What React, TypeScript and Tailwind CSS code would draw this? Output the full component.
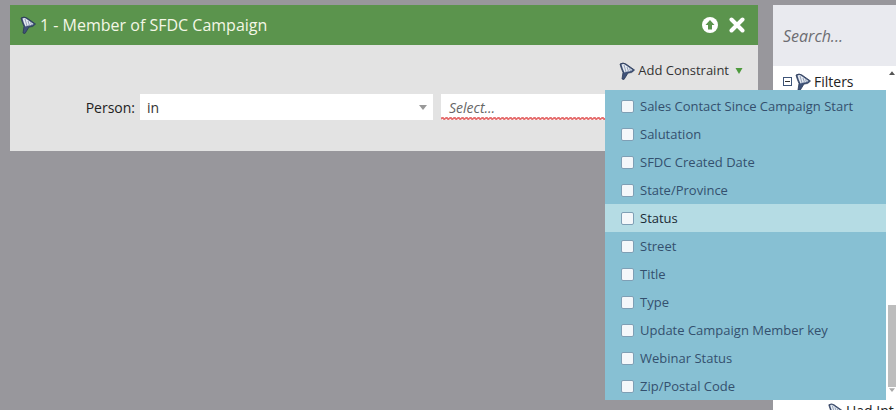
const items = [
  'Sales Contact Since Campaign Start',
  'Salutation',
  'SFDC Created Date',
  'State/Province',
  'Status',
  'Street',
  'Title',
  'Type',
  'Update Campaign Member key',
  'Webinar Status',
  'Zip/Postal Code',
];

function Funnel({ className }: { className: string }) {
  return (
    <svg viewBox="0 0 16 18" className={className}>
      <path d="M1 2 Q4 0 7 2 L15.5 8 Q13 11.5 9 11 L5 17.5 L3 17 L4 10.5 Q2 6 1 2 Z" fill="#3f5278" stroke="#2a3856" strokeWidth="0.8" />
      <path d="M2.5 2.5 Q4.5 1.5 6.5 3 L13.5 8 Q11 9.5 8.5 9.5 L5.5 10.5 Q3.5 6.5 2.5 2.5 Z" fill="#e6ebf2" />
      <path d="M5 3 L7 10 M8 5 L9.5 9.5 M10.5 6.5 L11.5 9" stroke="#7c8ca6" strokeWidth="0.8" />
    </svg>
  );
}

export default function App() {
  return (
    <div className="relative flex w-[896px] h-[410px] overflow-hidden gap-[15px] pl-[10px] pt-[5px] bg-[#98979c] font-['Open_Sans',sans-serif]">
      <div className="w-[748px] h-[146px] flex flex-col bg-[#e3e3e3]">
        <div className="h-10 flex items-center justify-between bg-[#5b944d] pl-[10px] pr-[13px]">
          <div className="flex items-center gap-[4px]">
            <Funnel className="w-4 h-[18px]" />
            <span className="text-[16px] text-[#f4f7e6]">1 - Member of SFDC Campaign</span>
          </div>
          <div className="flex items-center gap-[11px]">
            <svg viewBox="0 0 16 16" className="w-4 h-4">
              <circle cx="8" cy="8" r="8" fill="#fff" />
              <path d="M8 3 L12.5 8 H10 V12.5 H6 V8 H3.5 Z" fill="#5b944d" />
            </svg>
            <svg viewBox="0 0 16 16" className="w-4 h-4">
              <path d="M2.5 2.5 L13.5 13.5 M13.5 2.5 L2.5 13.5" stroke="#fff" strokeWidth="4" strokeLinecap="round" />
            </svg>
          </div>
        </div>
        <div className="flex justify-end items-center mt-[16px] h-[20px] pr-[15px]">
          <Funnel className="w-4 h-[18px]" />
          <span className="text-[13px] text-[#333] ml-[3px]">Add Constraint</span>
          <svg viewBox="0 0 8 8" className="w-2 h-2 ml-[6px]">
            <path d="M0.5 1 H7.5 L4 7 Z" fill="#4d9a3c" />
          </svg>
        </div>
        <div className="flex items-center mt-[13px] pl-[70px]">
          <span className="text-[14px] text-[#222] w-[55px] text-right">Person:</span>
          <div className="ml-[5px] w-[293px] h-[26px] bg-white flex items-center justify-between pl-[7px] pr-[5px]">
            <span className="text-[14px] text-[#333]">in</span>
            <svg viewBox="0 0 8 5" className="w-2 h-[5px] mr-[1px]">
              <path d="M0 0 H8 L4 5 Z" fill="#999" />
            </svg>
          </div>
          <div className="relative ml-[8px] w-[210px] h-[26px] bg-white flex items-center pl-[8px]">
            <span className="text-[14px] italic text-[#666]">Select...</span>
            <svg className="absolute left-0 bottom-0 w-full h-[3px]">
              <defs>
                <pattern id="squiggle" width="4" height="3" patternUnits="userSpaceOnUse">
                  <path d="M0 2 L1 1 L2 1 L3 2 L4 2" fill="none" stroke="#e56f6f" strokeWidth="1.8" />
                </pattern>
              </defs>
              <rect width="100%" height="3" fill="url(#squiggle)" />
            </svg>
          </div>
        </div>
      </div>

      <div className="relative flex-1 flex flex-col bg-white">
        <div className="h-[61px] bg-[#e9eaef] flex items-center pl-[10px]">
          <span className="text-[16px] italic text-[#6d6d72]">Search...</span>
        </div>
        <div className="flex items-center pl-[10px] pt-[5px] gap-[3px]">
          <span className="w-[9px] h-[9px] border border-[#3e5478] flex items-center justify-center">
            <span className="w-[5px] h-px bg-[#333]" />
          </span>
          <Funnel className="w-4 h-[18px]" />
          <span className="text-[14px] text-[#222]">Filters</span>
        </div>
        <div className="absolute right-0 top-[61px] h-[334px] w-2 flex flex-col items-center pt-[5px]">
          <svg viewBox="0 0 8 5" className="w-[6px] h-1">
            <path d="M0 5 H8 L4 0 Z" fill="#555" />
          </svg>
          <div className="w-full h-[82px] mt-[230px] bg-[#bdbdbd]" />
          <svg viewBox="0 0 8 5" className="w-[6px] h-1 mt-[1px]">
            <path d="M0 0 H8 L4 5 Z" fill="#aaa" />
          </svg>
        </div>
        <div className="absolute left-[54px] top-[395px] flex items-center gap-[3px]">
          <Funnel className="w-4 h-[16px]" />
          <span className="text-[14px] text-[#222] whitespace-nowrap">Had Int</span>
        </div>
      </div>

      <div className="absolute left-[605px] top-[90px] w-[281px] h-[310px] bg-[#87c0d3] flex flex-col pt-[2px]">
        {items.map((item) => (
          <div
            key={item}
            className={
              item === 'Status'
                ? 'h-7 flex items-center pl-[16px] gap-[6px] bg-[#b5dce4] text-[#1a2a35]'
                : 'h-7 flex items-center pl-[16px] gap-[6px] text-[#34506e]'
            }
          >
            <span className="w-[13px] h-[13px] rounded-[2px] bg-[#f4f7fa] border border-[#7f9fb5]" />
            <span className="text-[13px] whitespace-nowrap pt-[2px]">{item}</span>
          </div>
        ))}
      </div>
    </div>
  );
}
